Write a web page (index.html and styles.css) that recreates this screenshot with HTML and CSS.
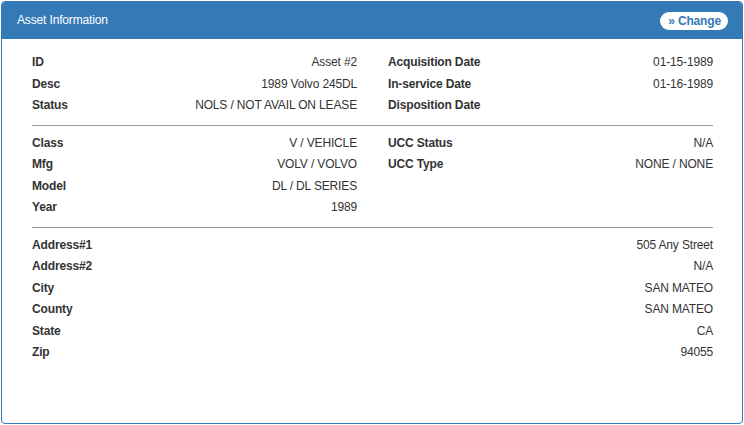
FILE: index.html
```html
<!DOCTYPE html>
<html lang="en">
<head>
  <meta charset="UTF-8" />
  <title>Asset Information</title>
  <link rel="stylesheet" href="styles.css">
</head>
<body>
  <div class="panel">
    <div class="panel-heading">
      <span class="panel-title">Asset Information</span>
      <a class="change-btn" href="#">&raquo; Change</a>
    </div>

    <div class="panel-body">
      <!-- General -->
      <div class="section">
        <div class="col">
          <div class="row"><span class="label">ID</span><span class="value">Asset #2</span></div>
          <div class="row"><span class="label">Desc</span><span class="value">1989 Volvo 245DL</span></div>
          <div class="row"><span class="label">Status</span><span class="value">NOLS / NOT AVAIL ON LEASE</span></div>
        </div>
        <div class="col">
          <div class="row"><span class="label">Acquisition Date</span><span class="value">01-15-1989</span></div>
          <div class="row"><span class="label">In-service Date</span><span class="value">01-16-1989</span></div>
          <div class="row"><span class="label">Disposition Date</span><span class="value"></span></div>
        </div>
      </div>

      <!-- Classification -->
      <div class="section">
        <div class="col">
          <div class="row"><span class="label">Class</span><span class="value">V / VEHICLE</span></div>
          <div class="row"><span class="label">Mfg</span><span class="value">VOLV / VOLVO</span></div>
          <div class="row"><span class="label">Model</span><span class="value">DL / DL SERIES</span></div>
          <div class="row"><span class="label">Year</span><span class="value">1989</span></div>
        </div>
        <div class="col">
          <div class="row"><span class="label">UCC Status</span><span class="value">N/A</span></div>
          <div class="row"><span class="label">UCC Type</span><span class="value">NONE / NONE</span></div>
        </div>
      </div>

      <!-- Location -->
      <div class="section single">
        <div class="col">
          <div class="row"><span class="label">Address#1</span><span class="value">505 Any Street</span></div>
          <div class="row"><span class="label">Address#2</span><span class="value">N/A</span></div>
          <div class="row"><span class="label">City</span><span class="value">SAN MATEO</span></div>
          <div class="row"><span class="label">County</span><span class="value">SAN MATEO</span></div>
          <div class="row"><span class="label">State</span><span class="value">CA</span></div>
          <div class="row"><span class="label">Zip</span><span class="value">94055</span></div>
        </div>
      </div>
    </div>
  </div>
</body>
</html>
```

FILE: styles.css
```css
* { margin: 0; padding: 0; box-sizing: border-box; }
body {
  font-family: "Liberation Sans", Arial, sans-serif;
  font-size: 12px;
  letter-spacing: -0.15px;
  color: #333;
  background: #fff;
  padding: 1px 1px 0 1px;
}
.panel {
  height: 423px;
  border: 1px solid #337ab7;
  border-radius: 4px;
  overflow: hidden;
}
.panel-heading {
  display: flex;
  align-items: center;
  justify-content: space-between;
  height: 37px;
  padding: 0 14px 0 15px;
  background: #337ab7;
  color: #fff;
}
.panel-title {
  font-size: 12px;
  padding-bottom: 2px;
}
.change-btn {
  display: inline-block;
  padding: 2px 7px 2px 8px;
  margin-top: 1px;
  background: #fff;
  border-radius: 9px;
  color: #337ab7;
  font-weight: bold;
  font-size: 12px;
  line-height: 14px;
  text-decoration: none;
}
.panel-body {
  padding: 13px 29px 0 30px;
}
.section {
  display: grid;
  grid-template-columns: 1fr 1fr;
  column-gap: 31px;
  padding: 0 0 8px;
  margin-bottom: 7px;
  border-bottom: 1px solid #999;
}
.section.single {
  grid-template-columns: 1fr;
  border-bottom: none;
}
.row {
  display: flex;
  justify-content: space-between;
  height: 21.5px;
  line-height: 21.5px;
}
.label {
  font-weight: bold;
}
```
